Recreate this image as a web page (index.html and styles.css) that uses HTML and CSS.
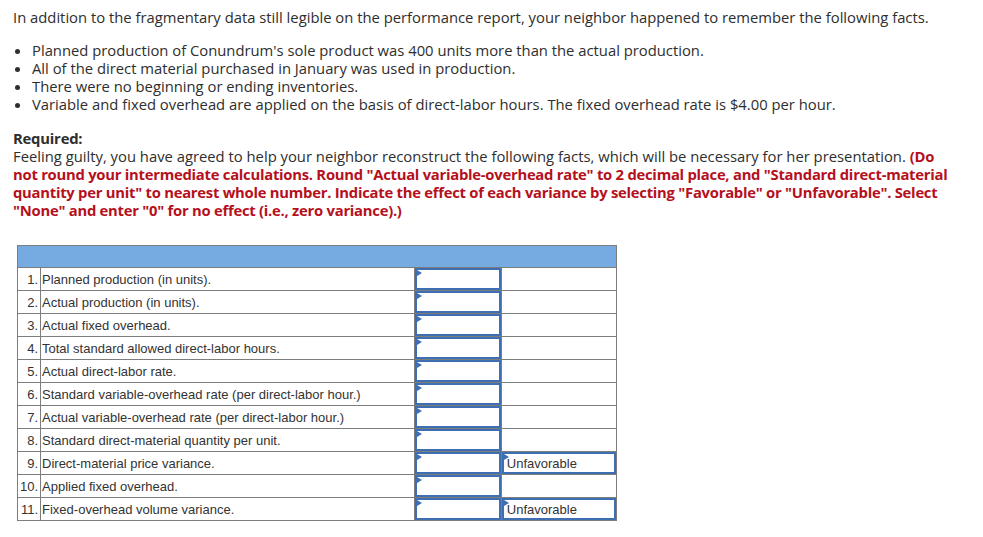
FILE: index.html
```html
<!DOCTYPE html>
<html>
<head>
<meta charset="utf-8">
<link rel="stylesheet" href="styles.css">
</head>
<body>
<div class="page">
  <p class="intro">In addition to the fragmentary data still legible on the performance report, your neighbor happened to remember the following facts.</p>
  <ul class="facts">
    <li>Planned production of Conundrum's sole product was 400 units more than the actual production.</li>
    <li>All of the direct material purchased in January was used in production.</li>
    <li>There were no beginning or ending inventories.</li>
    <li>Variable and fixed overhead are applied on the basis of direct-labor hours. The fixed overhead rate is $4.00 per hour.</li>
  </ul>
  <p class="req"><strong class="title">Required:</strong><br>Feeling guilty, you have agreed to help your neighbor reconstruct the following facts, which will be necessary for her presentation. <span class="red">(Do<br>not round your intermediate calculations. Round "Actual variable-overhead rate" to 2 decimal place, and "Standard direct-material<br>quantity per unit" to nearest whole number. Indicate the effect of each variance by selecting "Favorable" or "Unfavorable". Select<br>"None" and enter "0" for no effect (i.e., zero variance).)</span></p>

  <table class="grid">
    <tr class="head"><td colspan="4"></td></tr>
    <tr><td class="num">1.</td><td class="lbl">Planned production (in units).</td><td class="inp"><span class="tri"></span></td><td class="blank"></td></tr>
    <tr><td class="num">2.</td><td class="lbl">Actual production (in units).</td><td class="inp"><span class="tri"></span></td><td class="blank"></td></tr>
    <tr><td class="num">3.</td><td class="lbl">Actual fixed overhead.</td><td class="inp"><span class="tri"></span></td><td class="blank"></td></tr>
    <tr><td class="num">4.</td><td class="lbl">Total standard allowed direct-labor hours.</td><td class="inp"><span class="tri"></span></td><td class="blank"></td></tr>
    <tr><td class="num">5.</td><td class="lbl">Actual direct-labor rate.</td><td class="inp"><span class="tri"></span></td><td class="blank"></td></tr>
    <tr><td class="num">6.</td><td class="lbl">Standard variable-overhead rate (per direct-labor hour.)</td><td class="inp"><span class="tri"></span></td><td class="blank"></td></tr>
    <tr><td class="num">7.</td><td class="lbl">Actual variable-overhead rate (per direct-labor hour.)</td><td class="inp"><span class="tri"></span></td><td class="blank"></td></tr>
    <tr><td class="num">8.</td><td class="lbl">Standard direct-material quantity per unit.</td><td class="inp"><span class="tri"></span></td><td class="blank"></td></tr>
    <tr><td class="num">9.</td><td class="lbl">Direct-material price variance.</td><td class="inp"><span class="tri"></span></td><td class="inp sel"><span class="tri"></span>Unfavorable</td></tr>
    <tr><td class="num">10.</td><td class="lbl">Applied fixed overhead.</td><td class="inp"><span class="tri"></span></td><td class="blank"></td></tr>
    <tr><td class="num">11.</td><td class="lbl">Fixed-overhead volume variance.</td><td class="inp"><span class="tri"></span></td><td class="inp sel"><span class="tri"></span>Unfavorable</td></tr>
  </table>
</div>
</body>
</html>
```

FILE: styles.css
```css
html, body {
  margin: 0;
  padding: 0;
  background: #fff;
}
.page {
  padding: 8px 0 0 13px;
  font-family: "Open Sans", sans-serif;
  font-size: 14.8px;
  color: #2e2e2e;
}
.intro {
  margin: 0 0 15px 0;
  line-height: 18px;
  white-space: nowrap;
}
.facts {
  margin: 0;
  padding-left: 19px;
  line-height: 18px;
  white-space: nowrap;
}
.req {
  margin: 16px 0 0 0;
  line-height: 18px;
  white-space: nowrap;
}
.title {
  letter-spacing: -0.2px;
}
.red {
  color: #b5101c;
  font-weight: bold;
  letter-spacing: -0.25px;
}
.grid {
  margin: 26px 0 0 4px;
  border-collapse: collapse;
  width: 600px;
  font-family: "Liberation Sans", Arial, sans-serif;
  font-size: 13px;
  color: #333;
}
.grid td {
  border: 1px solid #7d7d7d;
  height: 22px;
  padding: 0;
  vertical-align: middle;
}
.grid .head td {
  background: #76abe2;
  height: 21px;
}
.num {
  width: 20px;
  text-align: right;
  padding-right: 2px !important;
}
.lbl {
  width: 371px;
  padding-left: 1px !important;
}
.inp {
  width: 86px;
  position: relative;
  box-shadow: inset 0 0 0 2px #3f6fb3;
}
.blank {
  width: 114px;
}
.sel {
  padding-left: 5px !important;
}
.tri {
  position: absolute;
  left: 2px;
  top: 2px;
  width: 0;
  height: 0;
  border-top: 3px solid transparent;
  border-bottom: 3px solid transparent;
  border-left: 5px solid #3f6fb3;
}
```
